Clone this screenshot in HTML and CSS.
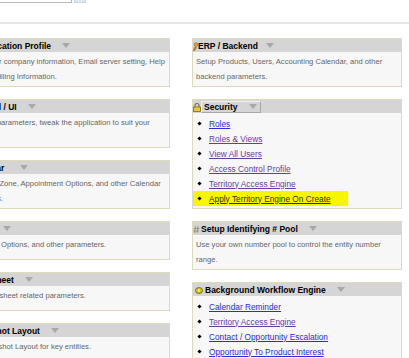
FILE: index.html
```html
<!DOCTYPE html>
<html lang="en">

<head>
    <meta charset="UTF-8">
    <meta name="viewport" content="width=device-width, initial-scale=1.0">
    <title>Settings</title>
    <link rel="stylesheet" href="styles.css">
</head>

<body>
    <div class="topbar">
        <input type="text" class="search-field">
        <button class="search-btn"></button>
    </div>
    <div class="rule"></div>

    <div class="columns">
        <div class="col col-left">
            <div class="panel">
                <div class="panel-head">
                    <span class="icon icon-profile"></span>
                    <span class="title">Application Profile</span>
                    <span class="caret"></span>
                </div>
                <div class="panel-body">Update all of your company information, Email server setting, Help Desk, and web Billing Information.</div>
            </div>
            <div class="panel">
                <div class="panel-head">
                    <span class="icon icon-ui"></span>
                    <span class="title">Portal / UI</span>
                    <span class="caret"></span>
                </div>
                <div class="panel-body">Setup your own parameters, tweak the application to suit your needs.</div>
            </div>
            <div class="panel">
                <div class="panel-head">
                    <span class="icon icon-calendar"></span>
                    <span class="title">Calendar</span>
                    <span class="caret caret-wide"></span>
                </div>
                <div class="panel-body">Setup your Time Zone, Appointment Options, and other Calendar event parameters.</div>
            </div>
            <div class="panel">
                <div class="panel-head">
                    <span class="icon icon-misc"></span>
                    <span class="title">Misc</span>
                    <span class="caret"></span>
                </div>
                <div class="panel-body">Setup the Locale Options, and other parameters.</div>
            </div>
            <div class="panel">
                <div class="panel-head">
                    <span class="icon icon-timesheet"></span>
                    <span class="title">Timesheet</span>
                    <span class="caret"></span>
                </div>
                <div class="panel-body">Set up your Timesheet related parameters.</div>
            </div>
            <div class="panel">
                <div class="panel-head">
                    <span class="icon icon-snapshot"></span>
                    <span class="title">Snapshot Layout</span>
                    <span class="caret"></span>
                </div>
                <div class="panel-body">Setup your Snapshot Layout for key entities.</div>
            </div>
        </div>

        <div class="col col-right">
            <div class="panel">
                <div class="panel-head">
                    <svg class="icon icon-erp" width="5" height="10" viewBox="0 0 5 10">
                        <circle cx="3" cy="3.5" r="1.8" fill="#e8a848" stroke="#8a5a10" stroke-width="0.6"/>
                        <path d="M0.3 9.6 L2 5.8 L3.4 6.6 L1.6 9.6 Z" fill="#c88838" stroke="#6a4a10" stroke-width="0.5"/>
                    </svg>
                    <span class="title">ERP / Backend</span>
                    <span class="caret caret-tight"></span>
                </div>
                <div class="panel-body">Setup Products, Users, Accounting Calendar, and other backend parameters.</div>
            </div>
            <div class="panel">
                <div class="panel-head">
                    <svg class="icon icon-lock" width="8" height="10" viewBox="0 0 8 10">
                        <path d="M2 5 V3.5 A2 2 0 0 1 6 3.5 V5" fill="none" stroke="#7a6a30" stroke-width="1.1"/>
                        <rect x="0.5" y="5" width="7" height="4.5" fill="#e8c840" stroke="#7a6a20" stroke-width="0.8"/>
                    </svg>
                    <span class="menu-box">
                        <span class="title">Security</span>
                        <span class="caret"></span>
                    </span>
                </div>
                <ul class="link-list">
                    <li><a href="#" class="new">Roles</a></li>
                    <li><a href="#">Roles &amp; Views</a></li>
                    <li><a href="#">View All Users</a></li>
                    <li><a href="#">Access Control Profile</a></li>
                    <li><a href="#">Territory Access Engine</a></li>
                    <li class="marked"><a href="#">Apply Territory Engine On Create</a></li>
                </ul>
            </div>
            <div class="panel">
                <div class="panel-head">
                    <svg class="icon icon-pool" width="7" height="10" viewBox="0 0 7 10">
                        <path d="M2.5 2 L1.7 9 M5 2 L4.2 9 M0.8 4.5 H6.5 M0.3 7 H6" stroke="#8a8a70" stroke-width="0.8" fill="none"/>
                    </svg>
                    <span class="title">Setup Identifying # Pool</span>
                    <span class="caret"></span>
                </div>
                <div class="panel-body">Use your own number pool to control the entity number range.</div>
            </div>
            <div class="panel">
                <div class="panel-head">
                    <svg class="icon icon-workflow" width="10" height="10" viewBox="0 0 10 10">
                        <ellipse cx="6" cy="5.5" rx="3.6" ry="3" fill="#c8c020" stroke="#6a6a10" stroke-width="0.8"/>
                        <circle cx="6" cy="5.5" r="1.2" fill="#f0f0a0"/>
                    </svg>
                    <span class="title">Background Workflow Engine</span>
                    <span class="caret"></span>
                </div>
                <ul class="link-list">
                    <li><a href="#" class="new">Calendar Reminder</a></li>
                    <li><a href="#">Territory Access Engine</a></li>
                    <li><a href="#" class="new">Contact / Opportunity Escalation</a></li>
                    <li><a href="#" class="new">Opportunity To Product Interest</a></li>
                </ul>
            </div>
        </div>
    </div>
</body>

</html>
```

FILE: styles.css
```css
/*css*/
body {
    font-family: "Liberation Sans", Arial, sans-serif;
    font-size: 7.6px;
    background-color: #ffffff;
    margin: 0;
    overflow: hidden;
}

.topbar {
    height: 3px;
    overflow: hidden;
    display: flex;
    align-items: flex-end;
    margin-left: -35px;
}

.search-field {
    width: 107px;
    height: 18px;
    padding: 0;
    border: 1px solid #b8b8b8;
    box-sizing: border-box;
}

.search-btn {
    width: 12px;
    height: 18px;
    margin-left: 2px;
    padding: 0;
    border: 1px solid #c8d8e8;
    background-color: #dfe9f5;
}

.rule {
    height: 2px;
    margin-top: 19px;
    background-color: #e6e6e6;
}

/* the page is scrolled sideways: the left column starts off-screen */
.columns {
    display: flex;
    align-items: flex-start;
    gap: 22px;
    margin-top: 14px;
    margin-left: -62px;
}

.col {
    display: flex;
    flex-direction: column;
    gap: 12px;
}

.col-left {
    width: 232px;
}

.col-right {
    width: 210px;
}

.panel {
    border: 1px solid #dddbb9;
    background-color: #f7f7f7;
}

.panel-head {
    height: 13px;
    background-color: #d5d5d5;
    display: flex;
    align-items: center;
    padding-left: 2px;
    font-weight: bold;
    font-size: 8.5px;
    color: #000000;
}

.col-right .panel-head {
    padding-left: 0;
}

.icon {
    height: 10px;
    margin-right: 2px;
    flex-shrink: 0;
}

.icon-profile { width: 33px; }
.icon-ui { width: 34px; }
.icon-calendar { width: 25px; }
.icon-misc { width: 30px; }
.icon-timesheet { width: 29px; }
.icon-snapshot { width: 28px; }

.icon-erp,
.icon-lock {
    margin-right: 0;
}

.icon-pool {
    margin-right: 1px;
}

.caret {
    width: 0;
    height: 0;
    margin-left: 11px;
    border-left: 4px solid transparent;
    border-right: 4px solid transparent;
    border-top: 5px solid #a8a8a8;
}

.caret-tight {
    margin-left: 8px;
}

.caret-wide {
    margin-left: 16px;
}

.menu-box {
    display: flex;
    align-items: center;
    height: 10px;
    padding: 0 2px;
    border: 1px solid #f2f2f2;
    border-right-color: #a8a8a8;
    border-bottom-color: #a8a8a8;
}

.menu-box .caret {
    margin-left: 11px;
    margin-right: 1px;
}

.panel-body {
    min-height: 20px;
    padding: 2px 1px 2px 3px;
    line-height: 15px;
    color: #666666;
}

.link-list {
    list-style: none;
    margin: 0;
    padding: 3px 0 2px;
}

.link-list li {
    display: flex;
    align-items: center;
    height: 15px;
    width: 155px;
}

.link-list li::before {
    content: "";
    width: 3px;
    height: 3px;
    margin: 0 8px 0 5px;
    background-color: #000000;
    transform: rotate(45deg);
}

.link-list a {
    color: #6a3aa0;
    font-size: 8.3px;
}

.link-list a.new {
    color: #2a2ae0;
}

.link-list li.marked {
    background-color: #f6f600;
}

.link-list li.marked a {
    color: #303010;
}
```
